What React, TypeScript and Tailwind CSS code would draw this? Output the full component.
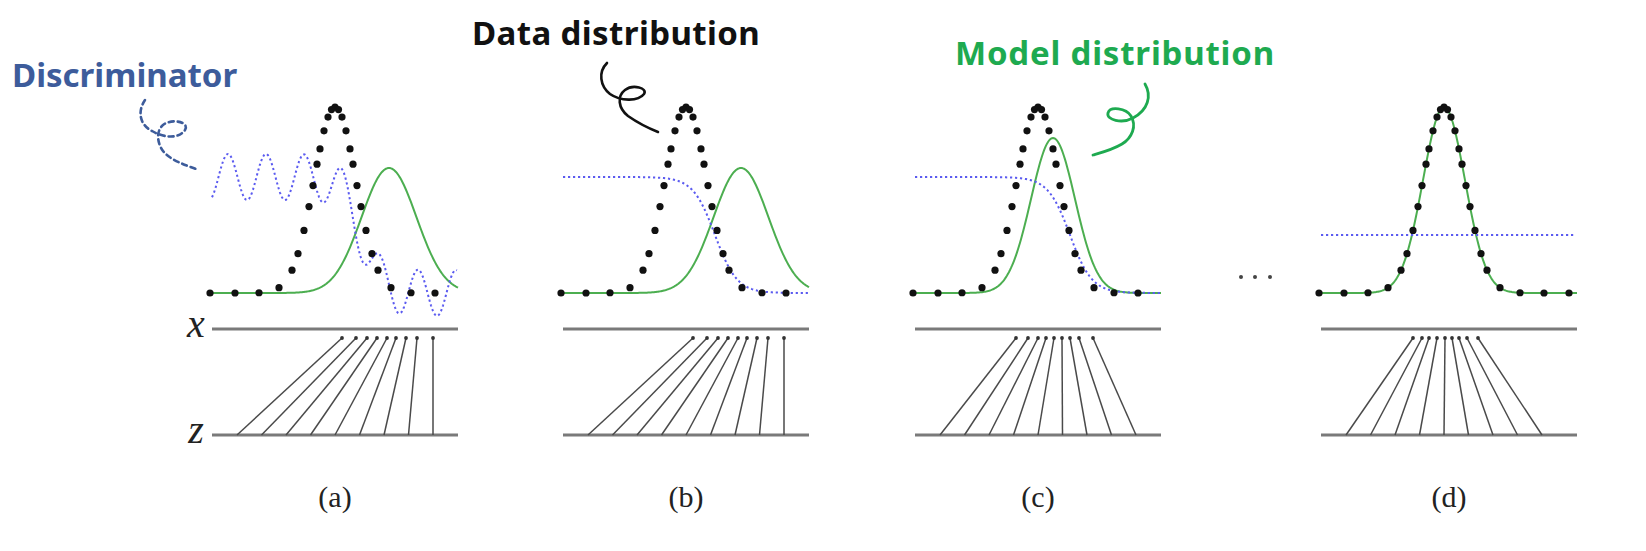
import React from "react";

// local coordinates inside each panel svg (page y - 95)
const BASE = 198;
const X_AXIS = 234;
const Z_AXIS = 340;
const TIP_Y = 243;
const DATA = { mu: 123, sig: 21, h: 186 };
const DOT_OFFSETS = [0, 3.5, 7, 11, 15, 18, 22, 26, 31, 37, 43, 56, 76, 100, 125, 150];

type Gauss = { mu: number; sig: number; h: number };

const gauss = (x: number, g: Gauss) =>
  BASE - g.h * Math.exp(-((x - g.mu) ** 2) / (2 * g.sig * g.sig));

const sigm = (x: number, c: number, s: number) => 1 / (1 + Math.exp((x - c) / s));

function curve(fn: (x: number) => number, x0: number, x1: number) {
  let d = "";
  for (let x = x0; x <= x1; x += 1) {
    d += `${x === x0 ? "M" : "L"}${x.toFixed(1)},${fn(x).toFixed(2)} `;
  }
  return d;
}

function dataDots(width: number) {
  const xs: number[] = [];
  DOT_OFFSETS.forEach((o) => {
    xs.push(DATA.mu - o);
    if (o !== 0) xs.push(DATA.mu + o);
  });
  return xs.filter((x) => x >= -4 && x <= width - 4);
}

type PanelProps = {
  label: string;
  width: number;
  green: Gauss;
  blue: (x: number) => number;
  tops: number[];
};

function Panel({ label, width, green, blue, tops }: PanelProps) {
  const bottoms = tops.map((_, i) => 25 + i * 24.5);

  return (
    <div className="flex flex-col items-center">
      <svg width={width} height={350} viewBox={`0 0 ${width} 350`} className="overflow-visible">
        <path d={curve((x) => gauss(x, green), 0, width)} fill="none" stroke="#4cae50" strokeWidth={2} />
        <path
          d={curve(blue, 0, width - 1)}
          fill="none"
          stroke="#5b5bf0"
          strokeWidth={2}
          strokeDasharray="2.2 2.8"
        />
        {dataDots(width).map((x) => (
          <circle key={x} cx={x} cy={gauss(x, DATA)} r={3.6} fill="#111" />
        ))}

        <line x1={0} y1={X_AXIS} x2={width} y2={X_AXIS} stroke="#7a7a7a" strokeWidth={3.2} />
        <line x1={0} y1={Z_AXIS} x2={width} y2={Z_AXIS} stroke="#7a7a7a" strokeWidth={3.2} />

        {tops.map((t, i) => (
          <g key={i}>
            <line x1={bottoms[i]} y1={Z_AXIS} x2={t} y2={TIP_Y} stroke="#4a4a4a" strokeWidth={1.5} />
            <circle cx={t} cy={TIP_Y} r={1.9} fill="#333" />
          </g>
        ))}
      </svg>
      <span className="mt-[37px] text-[30px] leading-none text-[#222] font-['Liberation_Serif',serif]">
        {label}
      </span>
    </div>
  );
}

const wavyD = (x: number) =>
  BASE - 116 * sigm(x, 149, 10) - 23 * Math.cos((2 * Math.PI * (x - 16)) / 38);

export default function App() {
  return (
    <div className="relative w-[1646px] h-[551px] overflow-hidden bg-white">
      <div className="flex items-start pl-[180px] pt-[95px]">
        <div className="flex w-[32px] flex-col items-center pt-[209px] font-['Liberation_Serif',serif] text-[40px] italic leading-none text-[#222]">
          <span className="h-[40px]">x</span>
          <span className="mt-[66px] h-[40px]">z</span>
        </div>

        <Panel
          label="(a)"
          width={246}
          green={{ mu: 177, sig: 27.5, h: 125 }}
          blue={wavyD}
          tops={[130, 144, 155, 165, 175, 184, 194, 205, 221]}
        />

        <div className="ml-[105px]">
          <Panel
            label="(b)"
            width={246}
            green={{ mu: 178, sig: 27.5, h: 125 }}
            blue={(x) => BASE - 116 * sigm(x, 152, 11)}
            tops={[130, 144, 155, 165, 175, 184, 194, 205, 221]}
          />
        </div>

        <div className="ml-[106px]">
          <Panel
            label="(c)"
            width={246}
            green={{ mu: 138, sig: 22, h: 155 }}
            blue={(x) => BASE - 116 * sigm(x, 155, 11)}
            tops={[101, 113, 123, 131, 139, 147, 155, 164, 178]}
          />
        </div>

        <svg width={160} height={350} viewBox="0 0 160 350">
          <circle cx={80} cy={182} r={2} fill="#444" />
          <circle cx={94} cy={182} r={2} fill="#444" />
          <circle cx={109} cy={182} r={2} fill="#444" />
        </svg>

        <Panel
          label="(d)"
          width={256}
          green={{ mu: 123, sig: 21, h: 186 }}
          blue={() => BASE - 58}
          tops={[92, 101, 108, 116, 124, 131, 138, 146, 157]}
        />
      </div>

      {/* annotations lying over the figure */}
      <div className="absolute left-[12px] top-[58px] font-['Noto_Sans',sans-serif] text-[33px] font-bold leading-none text-[#3d5c9b]">
        Discriminator
      </div>
      <div className="absolute left-[472px] top-[16px] font-['Noto_Sans',sans-serif] text-[33px] font-bold leading-none tracking-[0.4px] text-[#111]">
        Data distribution
      </div>
      <div className="absolute left-[955px] top-[36px] font-['Noto_Sans',sans-serif] text-[33px] font-bold leading-none tracking-[0.8px] text-[#1eaa50]">
        Model distribution
      </div>

      <svg className="pointer-events-none absolute inset-0" width={1646} height={551} fill="none">
        <path
          d="M145,100 C137,112 140,125 152,131 C162,137 178,140 185,130 C190,122 172,118 163,125 C156,131 157,143 163,151 C170,160 185,165 199,170"
          stroke="#3d5c9b"
          strokeWidth={2.6}
          strokeDasharray="5 4"
          strokeLinecap="round"
        />
        <path
          d="M607,63 C598,72 600,86 610,94 C620,101 638,102 644,94 C648,88 633,84 625,90 C617,96 618,108 628,116 C638,123 648,128 658,132"
          stroke="#111"
          strokeWidth={2.6}
          strokeLinecap="round"
        />
        <path
          d="M1145,84 C1152,96 1148,110 1133,118 C1122,124 1106,120 1108,113 C1110,106 1126,108 1131,116 C1137,126 1132,138 1122,144 C1112,150 1100,153 1093,155"
          stroke="#1eaa50"
          strokeWidth={2.8}
          strokeLinecap="round"
        />
      </svg>
    </div>
  );
}
